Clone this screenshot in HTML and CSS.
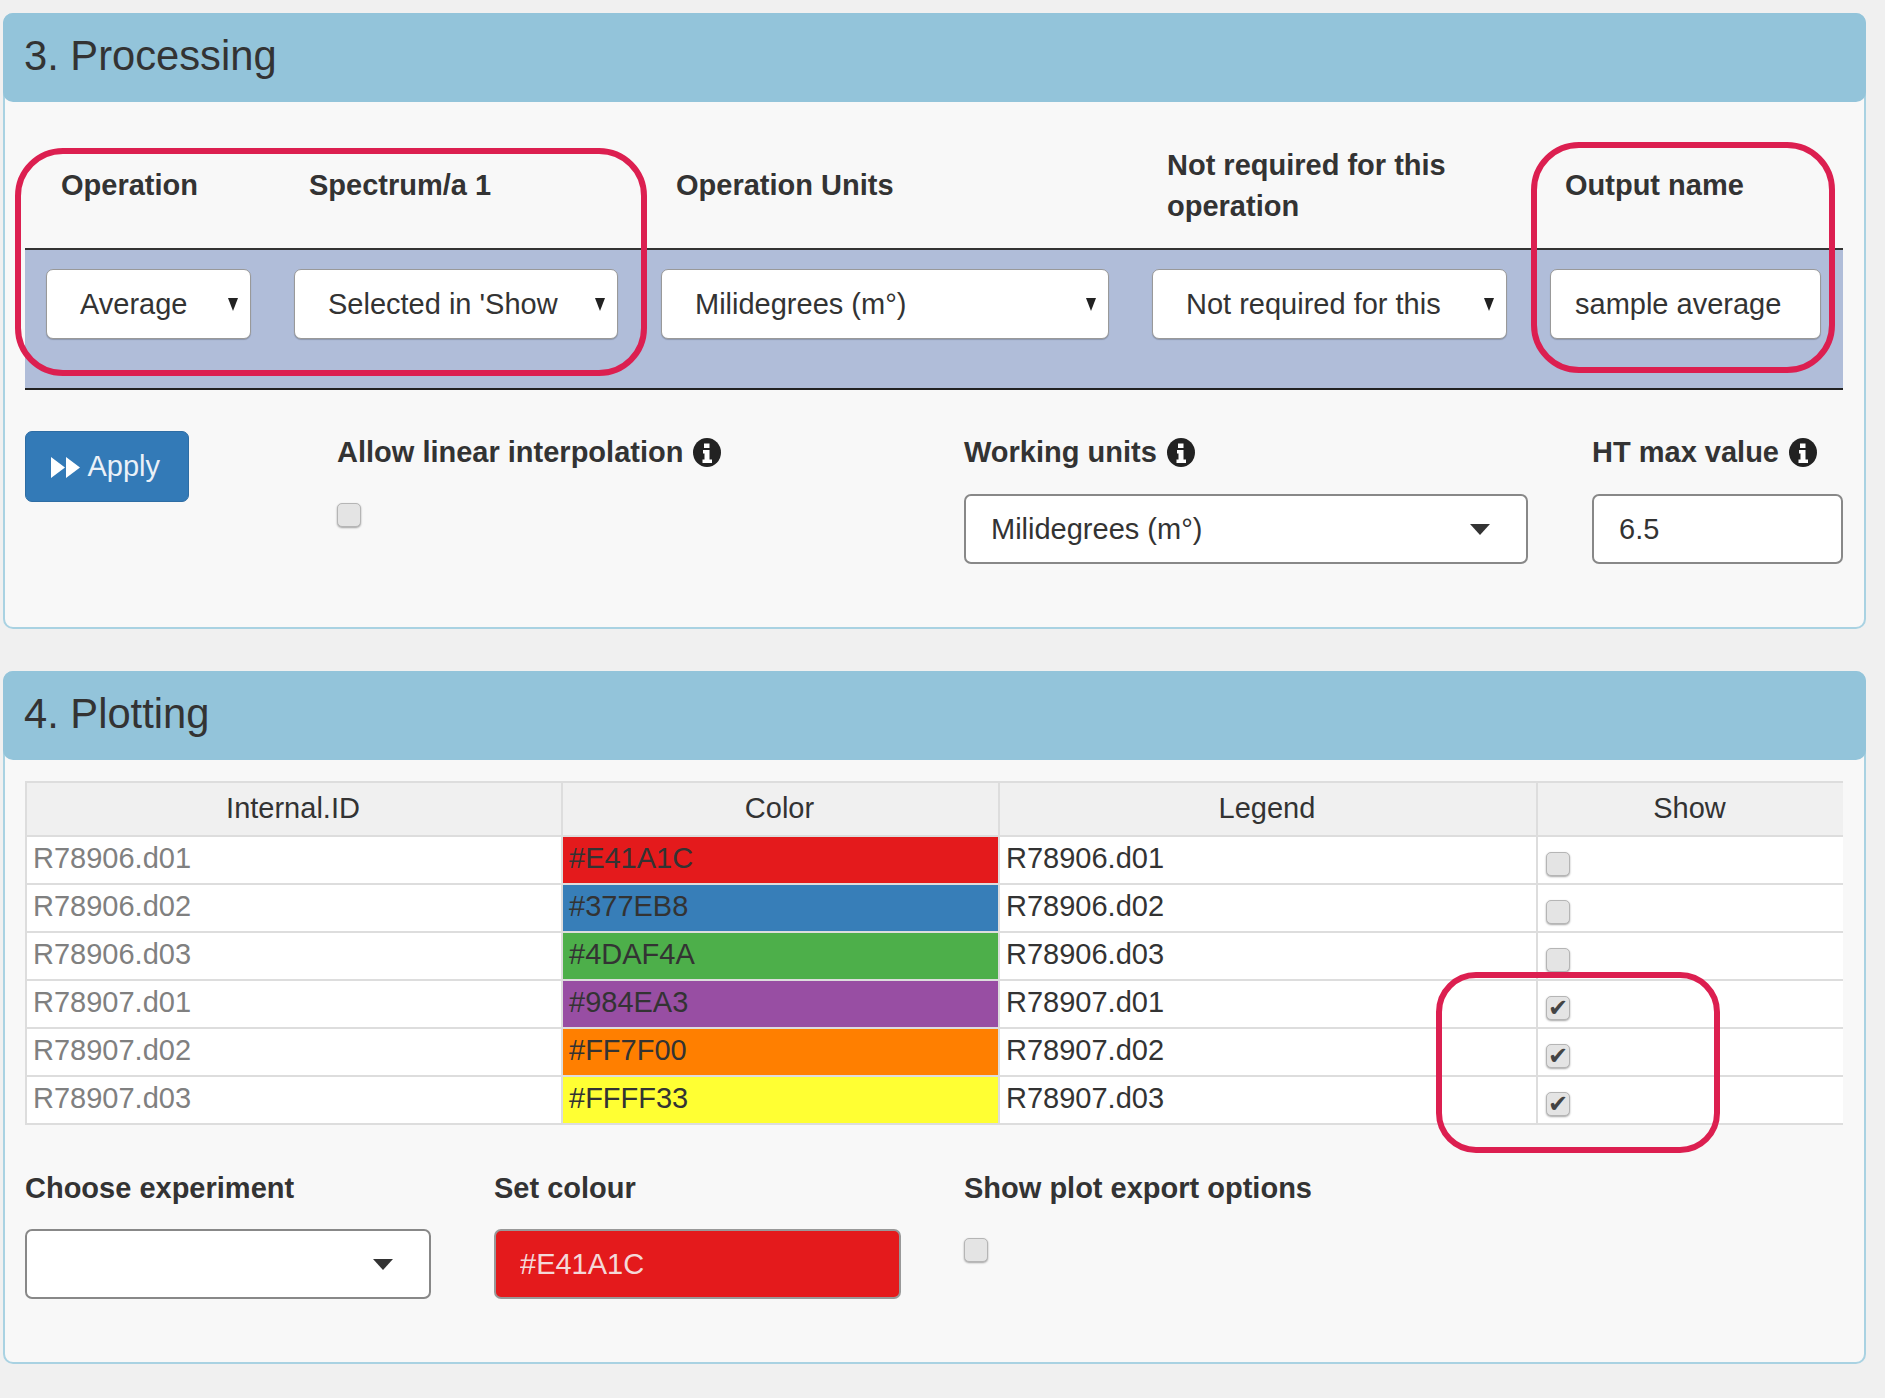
FILE: index.html
```html
<!DOCTYPE html>
<html lang="en">
<head>
    <meta charset="UTF-8">
    <meta name="viewport" content="width=device-width, initial-scale=1.0">
    <title>Processing and plotting</title>
    <link rel="stylesheet" href="styles.css">
</head>
<body>
    <svg width="0" height="0" class="defs">
        <symbol id="info" viewBox="0 0 28 29">
            <ellipse cx="14" cy="14.5" rx="14" ry="14.5" fill="#222"/>
            <path d="M11 5.5h5.5v4.5H11zM10 12h6.5v9.5H19V25H9.500v-3.500H11.500V15.500H10z" fill="#fff"/>
        </symbol>
    </svg>

    <section class="panel">
        <h3 class="panel-head">3. Processing</h3>
        <div class="panel-body">
            <table class="ops">
                <colgroup>
                    <col class="c1"><col class="c2"><col class="c3"><col class="c4"><col class="c5">
                </colgroup>
                <thead>
                    <tr>
                        <th>Operation</th>
                        <th>Spectrum/a 1</th>
                        <th>Operation Units</th>
                        <th>Not required for this operation</th>
                        <th>Output name</th>
                    </tr>
                </thead>
                <tbody>
                    <tr>
                        <td><div class="pick">Average<i class="arrow"></i></div></td>
                        <td><div class="pick">Selected in 'Show<i class="arrow"></i></div></td>
                        <td><div class="pick">Milidegrees (m°)<i class="arrow"></i></div></td>
                        <td><div class="pick">Not required for this<i class="arrow"></i></div></td>
                        <td><input type="text" class="pick pick-text" value="sample average"></td>
                    </tr>
                </tbody>
            </table>

            <div class="controls controls-a">
                <div>
                    <button class="btn-apply">
                        <svg width="29" height="23" viewBox="0 0 29 23"><path d="M0 1l14 10.500L0 22zM15 1l14 10.500L15 22z" fill="#fff"/></svg>
                        Apply
                    </button>
                </div>
                <div>
                    <label class="field-label">Allow linear interpolation <svg class="info"><use href="#info"/></svg></label>
                    <input type="checkbox" class="tick tick-block">
                </div>
                <div>
                    <label class="field-label">Working units <svg class="info"><use href="#info"/></svg></label>
                    <div class="box">Milidegrees (m°)<i class="caret"></i></div>
                </div>
                <div>
                    <label class="field-label">HT max value <svg class="info"><use href="#info"/></svg></label>
                    <input type="text" class="box" value="6.5">
                </div>
            </div>
        </div>
    </section>

    <section class="panel">
        <h3 class="panel-head">4. Plotting</h3>
        <div class="panel-body">
            <table class="samples">
                <colgroup>
                    <col class="s1"><col class="s2"><col class="s3"><col class="s4">
                </colgroup>
                <thead>
                    <tr><th>Internal.ID</th><th>Color</th><th>Legend</th><th>Show</th></tr>
                </thead>
                <tbody>
                    <tr><td class="id">R78906.d01</td><td class="col-e41">#E41A1C</td><td>R78906.d01</td><td><input type="checkbox" class="tick"></td></tr>
                    <tr><td class="id">R78906.d02</td><td class="col-377">#377EB8</td><td>R78906.d02</td><td><input type="checkbox" class="tick"></td></tr>
                    <tr><td class="id">R78906.d03</td><td class="col-4da">#4DAF4A</td><td>R78906.d03</td><td><input type="checkbox" class="tick"></td></tr>
                    <tr><td class="id">R78907.d01</td><td class="col-984">#984EA3</td><td>R78907.d01</td><td><input type="checkbox" class="tick" checked></td></tr>
                    <tr><td class="id">R78907.d02</td><td class="col-ff7">#FF7F00</td><td>R78907.d02</td><td><input type="checkbox" class="tick" checked></td></tr>
                    <tr><td class="id">R78907.d03</td><td class="col-fff">#FFFF33</td><td>R78907.d03</td><td><input type="checkbox" class="tick" checked></td></tr>
                </tbody>
            </table>

            <div class="controls controls-b">
                <div>
                    <label class="field-label">Choose experiment</label>
                    <div class="box"><i class="caret"></i></div>
                </div>
                <div>
                    <label class="field-label">Set colour</label>
                    <input type="text" class="box box-colour" value="#E41A1C">
                </div>
                <div>
                    <label class="field-label">Show plot export options</label>
                    <input type="checkbox" class="tick tick-block">
                </div>
            </div>
        </div>
    </section>

    <!-- red annotation boxes drawn over the screenshot -->
    <div class="mark mark-1"></div>
    <div class="mark mark-2"></div>
    <div class="mark mark-3"></div>
</body>
</html>
```

FILE: styles.css
```css
* {
    box-sizing: border-box;
}
html, body {
    height: 1398px;
    overflow: hidden;
}
body {
    position: relative;
    margin: 0;
    padding: 13px 19px 0 3px;
    background-color: #f0f0f0;
    font-family: "Liberation Sans", Arial, sans-serif;
    font-size: 29px;
    color: #333;
}
.defs {
    position: absolute;
}

.panel {
    margin-bottom: 42px;
    background-color: #f8f8f8;
    border: 2px solid #a9d2e2;
    border-radius: 10px;
}
.panel-head {
    margin: -2px -2px 0;
    height: 89px;
    padding: 0 21px;
    background-color: #93c4da;
    border-radius: 10px;
    font-size: 41.7px;
    font-weight: normal;
    line-height: 86px;
}
.panel-body {
    padding: 20px 21px 63px 20px;
}

/* operations table */
table {
    width: 100%;
    table-layout: fixed;
    border-collapse: collapse;
}
.c1 { width: 248px; }
.c2 { width: 367px; }
.c3 { width: 491px; }
.c4 { width: 398px; }
.c5 { width: 314px; }
.ops th {
    height: 127px;
    padding: 2px 22px 0 36px;
    border-bottom: 2px solid #333;
    font-size: 29px;
    line-height: 41.500px;
    text-align: left;
}
.ops td {
    padding: 19px 22px 49px 21px;
    background-color: #b0bdd9;
    border-bottom: 2px solid #222;
}
.pick {
    position: relative;
    display: block;
    width: 100%;
    height: 70px;
    padding-left: 33px;
    background-color: #fff;
    border: 1px solid #999;
    border-radius: 7px;
    box-shadow: 0 1px 1px rgba(0, 0, 0, 0.2);
    font-family: inherit;
    font-size: 29px;
    color: #333;
    line-height: 68px;
}
.pick-text {
    padding-left: 24px;
}
.arrow {
    position: absolute;
    top: 28px;
    right: 12px;
    border-style: solid;
    border-width: 13px 5.500px 0;
    border-color: #222 transparent transparent;
}

/* rows of inputs under the tables */
.controls {
    display: grid;
}
.controls-a {
    grid-template-columns: 248px 563px 564px 251px;
    column-gap: 64px;
    padding-top: 41px;
}
.controls-b {
    grid-template-columns: 406px 407px 1fr;
    column-gap: 63px;
    padding-top: 42px;
}
.field-label {
    display: block;
    height: 40px;
    margin-bottom: 23px;
    font-size: 29px;
    font-weight: bold;
    line-height: 42px;
    white-space: nowrap;
}
.controls-b .field-label {
    margin-bottom: 22px;
}
.info {
    width: 28px;
    height: 29px;
    margin-left: 2px;
    vertical-align: -5px;
}
.btn-apply {
    width: 164px;
    height: 71px;
    padding: 0 0 0 25px;
    background-color: #337ab7;
    border: 1px solid #2e6da4;
    border-radius: 7px;
    font-family: inherit;
    font-size: 29px;
    color: #eaf1f8;
    text-align: left;
    white-space: nowrap;
}
.btn-apply svg {
    margin-right: 1px;
    vertical-align: -3px;
}
.box {
    position: relative;
    display: block;
    width: 100%;
    height: 70px;
    padding-left: 25px;
    background-color: #fff;
    border: 2px solid #888;
    border-radius: 7px;
    font-family: inherit;
    font-size: 29px;
    color: #333;
    line-height: 66px;
}
.box-colour {
    padding-left: 24px;
    background-color: #e41a1c;
    border-color: #999;
    color: #f4d8d8;
}
.caret {
    position: absolute;
    top: 28px;
    right: 36px;
    border-style: solid;
    border-width: 11px 10px 0;
    border-color: #333 transparent transparent;
}
.tick {
    position: relative;
    appearance: none;
    display: block;
    width: 24px;
    height: 24px;
    margin: 0;
    background-color: #e4e4e4;
    border: 1px solid #b5b5b5;
    border-radius: 5px;
    box-shadow: 0 1px 2px rgba(0, 0, 0, 0.35);
}
.tick:checked::after {
    content: "✔";
    position: absolute;
    top: -3px;
    left: 1px;
    font-family: "DejaVu Sans", sans-serif;
    font-size: 24px;
    line-height: 28px;
    color: #444;
}
.tick-block {
    margin-top: 32px;
}
.controls-b .tick-block {
    margin-top: 31px;
}

/* samples table */
.s1 { width: 536px; }
.s2 { width: 437px; }
.s3 { width: 538px; }
.samples {
    margin-top: 1px;
    border-top: 2px solid #ddd;
    border-bottom: 2px solid #ddd;
    border-left: 2px solid #ddd;
    background-color: #fff;
}
.samples th {
    height: 54px;
    padding: 0 2px 1px 0;
    background-color: #f0f0f0;
    border: 2px solid #ddd;
    border-top: 0;
    border-right: 0;
    font-size: 29px;
    font-weight: normal;
    text-align: center;
}
.samples th:first-child,
.samples td:first-child {
    border-left: 0;
}
.samples td {
    height: 48px;
    padding: 0 8px 5px 6px;
    border-top: 2px solid #ddd;
    border-left: 2px solid #ddd;
    font-size: 29px;
    line-height: 40px;
}
.samples td:last-child {
    padding: 7px 8px 0;
}
.samples .id {
    color: #808080;
}
.col-e41 { background-color: #e41a1c; }
.col-377 { background-color: #377eb8; }
.col-4da { background-color: #4daf4a; }
.col-984 { background-color: #984ea3; }
.col-ff7 { background-color: #ff7f00; }
.col-fff { background-color: #ffff33; }

/* annotation boxes */
.mark {
    position: absolute;
    border: 6px solid #dc1f50;
    border-radius: 48px;
}
.mark-1 {
    left: 15px;
    top: 148px;
    width: 632px;
    height: 228px;
}
.mark-2 {
    left: 1531px;
    top: 142px;
    width: 304px;
    height: 231px;
}
.mark-3 {
    left: 1436px;
    top: 972px;
    width: 284px;
    height: 181px;
    border-radius: 40px;
}
```
